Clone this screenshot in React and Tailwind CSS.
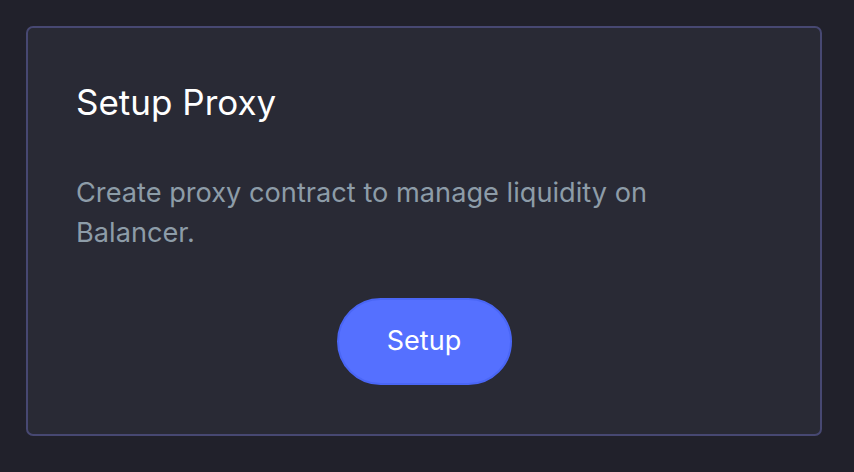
export default function App() {
  return (
    <div className="min-h-screen w-full bg-[#21212b] p-[26px] font-['Inter',sans-serif]">
      <div className="h-[410px] w-[796px] rounded-[7px] border-2 border-[#474872] bg-[#292a35] px-[48px] pt-[54px]">
        <h2 className="text-[35px] leading-[40px] font-normal text-white">Setup Proxy</h2>
        <p className="mt-[51px] w-[640px] text-[27.2px] leading-[40px] text-[#8d9ca8]">
          Create proxy contract to manage liquidity on Balancer.
        </p>
        <div className="mt-[45px] flex justify-center">
          <button className="h-[87px] w-[175px] rounded-full border-2 border-[#4a66f5] bg-[#5570ff] text-[27px] text-white">
            Setup
          </button>
        </div>
      </div>
    </div>
  );
}
